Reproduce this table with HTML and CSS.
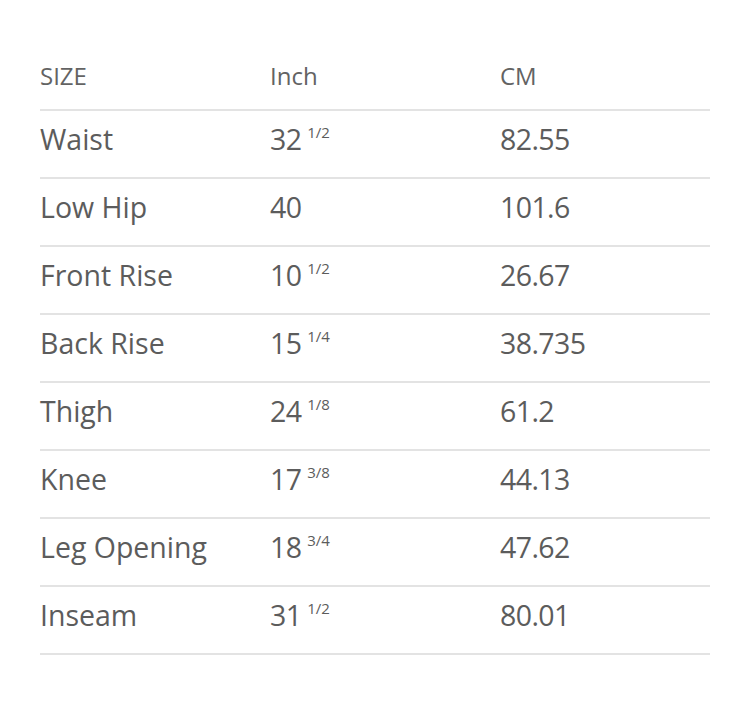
FILE: index.html
```html
<!DOCTYPE html>
<html lang="en">
<head>
<meta charset="utf-8">
<title>Size chart</title>
<link rel="stylesheet" href="styles.css">
</head>
<body>
<div class="chart">
  <div class="row head"><div>SIZE</div><div>Inch</div><div>CM</div></div>
  <div class="row"><div>Waist</div><div class="num">32 <sup>1/2</sup></div><div class="num">82.55</div></div>
  <div class="row"><div>Low Hip</div><div class="num">40</div><div class="num">101.6</div></div>
  <div class="row"><div>Front Rise</div><div class="num">10 <sup>1/2</sup></div><div class="num">26.67</div></div>
  <div class="row"><div>Back Rise</div><div class="num">15 <sup>1/4</sup></div><div class="num">38.735</div></div>
  <div class="row"><div>Thigh</div><div class="num">24 <sup>1/8</sup></div><div class="num">61.2</div></div>
  <div class="row"><div>Knee</div><div class="num">17 <sup>3/8</sup></div><div class="num">44.13</div></div>
  <div class="row"><div>Leg Opening</div><div class="num">18 <sup>3/4</sup></div><div class="num">47.62</div></div>
  <div class="row"><div>Inseam</div><div class="num">31 <sup>1/2</sup></div><div class="num">80.01</div></div>
</div>
</body>
</html>
```

FILE: styles.css
```css
html, body {
  margin: 0;
  background: #ffffff;
}
body {
  padding: 43px 40px 0 40px;
  font-family: "Open Sans", "Liberation Sans", sans-serif;
  font-weight: 400;
  color: #5c5c5c;
}
.chart {
  width: 670px;
}
.row {
  display: grid;
  grid-template-columns: 230px 230px 1fr;
  align-items: center;
  box-sizing: border-box;
  height: 68px;
  padding-bottom: 8px;
  border-bottom: 2px solid #e3e3e3;
  font-size: 28.5px;
  line-height: 1.3;
}
.row.head {
  padding-bottom: 0;
  font-size: 24px;
  color: #636363;
}
.num {
  letter-spacing: -0.6px;
}
sup {
  font-size: 15px;
  letter-spacing: 0;
  vertical-align: 0;
  position: relative;
  top: -12px;
  line-height: 0;
  margin-left: -1px;
}
```
